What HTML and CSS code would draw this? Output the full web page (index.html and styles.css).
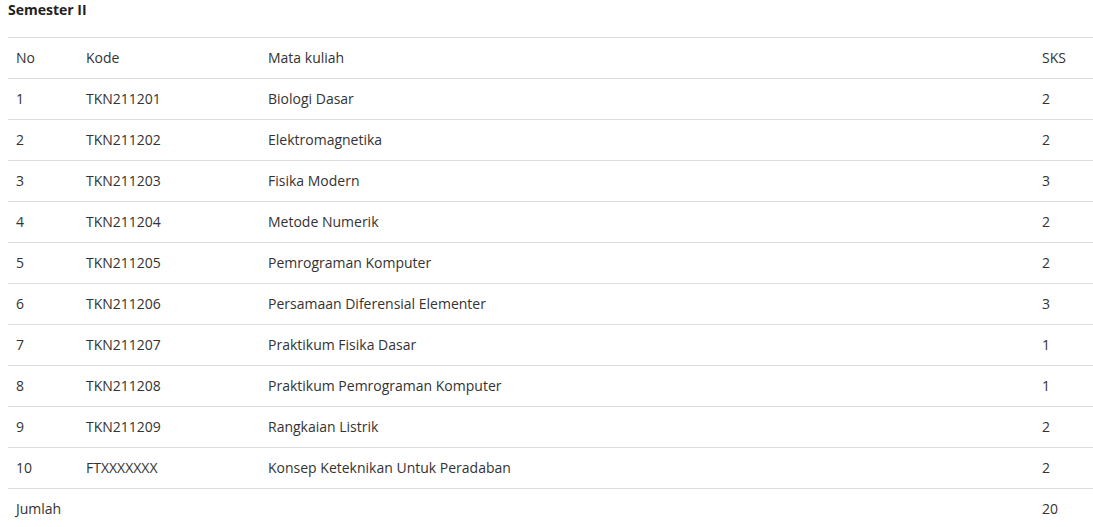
FILE: index.html
```html
<!DOCTYPE html>
<html>
<head>
<meta charset="utf-8">
<link rel="stylesheet" href="styles.css">
</head>
<body>
<div class="page">
  <h4 class="semester-title">Semester II</h4>
  <table class="course-table">
    <colgroup>
      <col class="col-no">
      <col class="col-kode">
      <col class="col-mk">
      <col class="col-sks">
    </colgroup>
    <thead>
      <tr><td>No</td><td>Kode</td><td>Mata kuliah</td><td>SKS</td></tr>
    </thead>
    <tbody>
      <tr><td>1</td><td>TKN211201</td><td>Biologi Dasar</td><td>2</td></tr>
      <tr><td>2</td><td>TKN211202</td><td>Elektromagnetika</td><td>2</td></tr>
      <tr><td>3</td><td>TKN211203</td><td>Fisika Modern</td><td>3</td></tr>
      <tr><td>4</td><td>TKN211204</td><td>Metode Numerik</td><td>2</td></tr>
      <tr><td>5</td><td>TKN211205</td><td>Pemrograman Komputer</td><td>2</td></tr>
      <tr><td>6</td><td>TKN211206</td><td>Persamaan Diferensial Elementer</td><td>3</td></tr>
      <tr><td>7</td><td>TKN211207</td><td>Praktikum Fisika Dasar</td><td>1</td></tr>
      <tr><td>8</td><td>TKN211208</td><td>Praktikum Pemrograman Komputer</td><td>1</td></tr>
      <tr><td>9</td><td>TKN211209</td><td>Rangkaian Listrik</td><td>2</td></tr>
      <tr><td>10</td><td>FTXXXXXXX</td><td>Konsep Keteknikan Untuk Peradaban</td><td>2</td></tr>
      <tr><td>Jumlah</td><td></td><td></td><td>20</td></tr>
    </tbody>
  </table>
</div>
</body>
</html>
```

FILE: styles.css
```css
html, body {
  margin: 0;
  padding: 0;
  background: #fff;
}
body {
  font-family: "Open Sans", "Noto Sans", sans-serif;
  font-size: 14px;
  line-height: 20px;
  color: #333;
}
.page {
  padding-left: 8px;
}
.semester-title {
  margin: 0 0 17px 0;
  font-size: 14px;
  line-height: 20px;
  font-weight: 700;
  color: #222;
}
.course-table {
  width: 1085px;
  border-collapse: collapse;
  table-layout: fixed;
}
.col-no { width: 70px; }
.col-kode { width: 182px; }
.col-mk { width: 774px; }
.col-sks { width: 59px; }
.course-table td {
  padding: 10px 8px;
  border-top: 1px solid #ddd;
  white-space: nowrap;
  vertical-align: top;
}
```
